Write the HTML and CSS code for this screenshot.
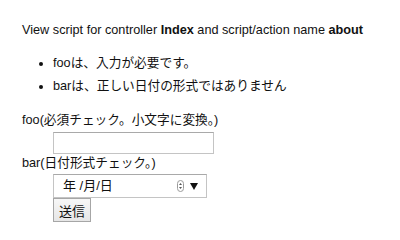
FILE: index.html
```html
<!DOCTYPE html>
<html>
<head>
	<meta charset="UTF-8">
	<title>about</title>
	<link rel="stylesheet" href="styles.css">
</head>
<body>
	<p class="intro">View script for controller <b>Index</b> and script/action name <b>about</b></p>
	<ul class="errors">
		<li>fooは、入力が必要です。</li>
		<li>barは、正しい日付の形式ではありません</li>
	</ul>
	<form class="form" action="" method="post">
		<dl>
			<dt><label for="foo">foo(必須チェック。小文字に変換。)</label></dt>
			<dd><input type="text" id="foo" name="foo" class="text"></dd>
			<dt><label for="bar">bar(日付形式チェック。)</label></dt>
			<dd>
				<div class="date">
					<span class="date-value">年 /月/日</span>
					<svg class="spin" width="7" height="12" viewBox="0 0 7 12">
						<rect x="0.5" y="0.5" width="6" height="11" rx="3" fill="#fff" stroke="#9a9a9a"/>
						<path d="M2 5 L3.5 3 L5 5 Z M2 7 L3.5 9 L5 7 Z" fill="#555"/>
					</svg>
					<svg class="drop" width="8" height="7" viewBox="0 0 8 7">
						<path d="M0 0 H8 L4 7 Z" fill="#111"/>
					</svg>
				</div>
			</dd>
			<dd><button type="submit" class="submit">送信</button></dd>
		</dl>
	</form>
</body>
</html>
```

FILE: styles.css
```css
* {
	box-sizing: border-box;
}

body {
	margin: 0;
	padding: 21px 22px;
	background: #fff;
	color: #111;
	font-family: "Liberation Sans", "Noto Sans CJK JP", sans-serif;
	font-size: 12.7px;
	line-height: 18px;
}

.intro {
	margin: 0;
}

.errors {
	margin: 13px 0 0;
	padding-left: 31px;
}

.errors li {
	line-height: 23px;
}

.form dl {
	margin: 13px 0 0;
}

.form dt {
	line-height: 18px;
}

.form dd {
	margin: 0 0 0 31px;
}

.form dd:nth-of-type(1) {
	padding-top: 3px;
}

.form dd:nth-of-type(2) {
	padding-top: 2px;
}

.text {
	display: block;
	width: 161px;
	height: 22px;
	margin: 0;
	border: 1px solid #c4c4c4;
	border-top-color: #a9a9a9;
	background: #fff;
}

.date {
	display: flex;
	align-items: center;
	width: 154px;
	height: 24px;
	padding: 0 8px 0 9px;
	border: 1px solid #c4c4c4;
	border-top-color: #a9a9a9;
	font-size: 13px;
}

.date-value {
	flex: 1;
}

.spin {
	display: block;
	margin-right: 6px;
}

.drop {
	display: block;
}

.submit {
	display: block;
	width: 38px;
	height: 24px;
	margin: 0;
	padding: 0;
	border: 1px solid #a6a6a6;
	background: linear-gradient(#f7f7f7, #e6e6e6);
	font-family: "Noto Sans CJK JP", sans-serif;
	font-size: 13px;
	color: #111;
}
```
